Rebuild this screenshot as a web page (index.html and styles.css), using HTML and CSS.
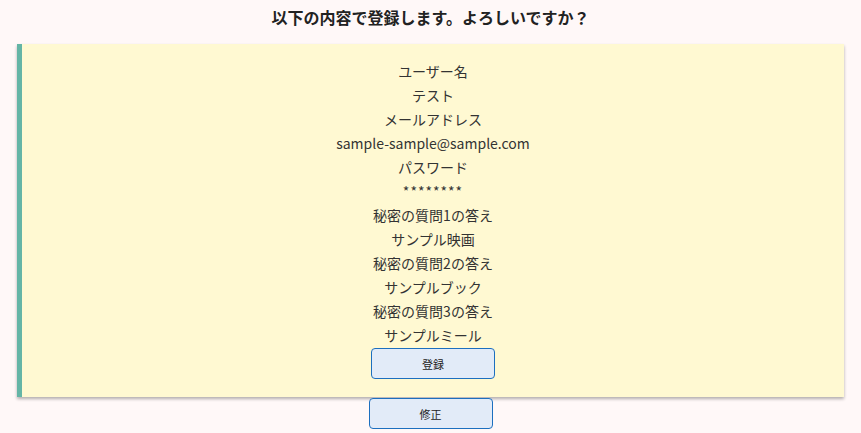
FILE: index.html
```html
<!DOCTYPE html>
<html lang="ja">
<head>
<meta charset="utf-8">
<link rel="stylesheet" href="styles.css">
</head>
<body>
<h1 class="title">以下の内容で登録します。よろしいですか？</h1>
<div class="card">
  <p>ユーザー名</p>
  <p>テスト</p>
  <p>メールアドレス</p>
  <p>sample-sample@sample.com</p>
  <p>パスワード</p>
  <p class="stars">********</p>
  <p>秘密の質問1の答え</p>
  <p>サンプル映画</p>
  <p>秘密の質問2の答え</p>
  <p>サンプルブック</p>
  <p>秘密の質問3の答え</p>
  <p>サンプルミール</p>
  <button class="btn">登録</button>
</div>
<div class="below">
  <button class="btn">修正</button>
</div>
</body>
</html>
```

FILE: styles.css
```css
html, body {
  margin: 0;
  padding: 0;
  background: #fff8f8;
}
body {
  font-family: "Noto Sans CJK JP", "Noto Sans", sans-serif;
  color: #333;
}
.title {
  margin: 6px 0 0;
  height: 38px;
  font-size: 16px;
  line-height: 22px;
  font-weight: bold;
  text-align: center;
  color: #222;
}
.card {
  margin: 0 17px;
  background: #fff9d2;
  border-left: 5px solid #64b5a6;
  box-shadow: 0 2px 3px rgba(0, 0, 0, 0.3);
  padding: 15px 0 18px;
  display: flex;
  flex-direction: column;
  align-items: center;
}
.card p {
  margin: 0;
  font-size: 14px;
  line-height: 24px;
}
.card .stars {
  letter-spacing: 1px;
}
.btn {
  width: 124px;
  height: 31px;
  background: #e2ebf8;
  border: 1px solid #1c6fbf;
  border-radius: 4px;
  font-family: "Noto Sans CJK JP", sans-serif;
  font-size: 11px;
  color: #222;
  padding: 0;
  margin-top: 1px;
}
.below {
  display: flex;
  justify-content: center;
  padding-top: 1px;
}
.below .btn {
  margin-top: 0;
}
```
